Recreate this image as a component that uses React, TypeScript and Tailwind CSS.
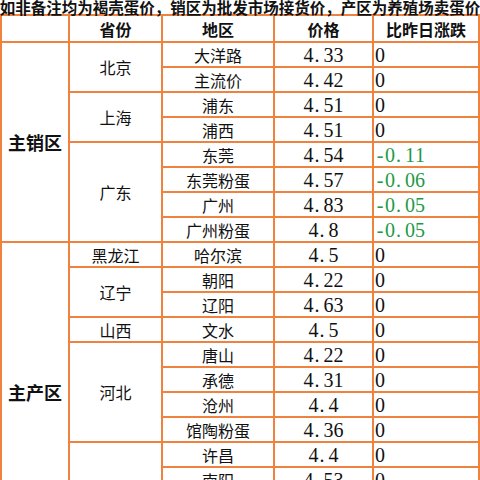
import React from "react"

const line = "border-2 border-[#f0823f]"
const cjk = "font-['Noto_Sans_CJK_SC',sans-serif]"

type Row = { area?: [string, number]; prov?: [string, number]; place: string; price: string; change: string }

const rows: Row[] = [
    { area: ["主销区", 8], prov: ["北京", 2], place: "大洋路", price: "4.33", change: "0" },
    { place: "主流价", price: "4.42", change: "0" },
    { prov: ["上海", 2], place: "浦东", price: "4.51", change: "0" },
    { place: "浦西", price: "4.51", change: "0" },
    { prov: ["广东", 4], place: "东莞", price: "4.54", change: "-0.11" },
    { place: "东莞粉蛋", price: "4.57", change: "-0.06" },
    { place: "广州", price: "4.83", change: "-0.05" },
    { place: "广州粉蛋", price: "4.8", change: "-0.05" },
    { area: ["主产区", 14], prov: ["黑龙江", 1], place: "哈尔滨", price: "4.5", change: "0" },
    { prov: ["辽宁", 2], place: "朝阳", price: "4.22", change: "0" },
    { place: "辽阳", price: "4.63", change: "0" },
    { prov: ["山西", 1], place: "文水", price: "4.5", change: "0" },
    { prov: ["河北", 4], place: "唐山", price: "4.22", change: "0" },
    { place: "承德", price: "4.31", change: "0" },
    { place: "沧州", price: "4.4", change: "0" },
    { place: "馆陶粉蛋", price: "4.36", change: "0" },
    { prov: ["河南", 4], place: "许昌", price: "4.4", change: "0" },
    { place: "南阳", price: "4.53", change: "0" },
    { place: "商丘", price: "4.4", change: "0" },
    { place: "驻马店", price: "4.4", change: "0" },
]

// SimSun-like half-width digits: every character sits in a 10px slot
function Num({ value, className }: { value: string; className?: string }) {
    return (
        <span className={"font-['Liberation_Serif',serif] text-[20px] " + (className ?? "")}>
            {value.split("").map((c, i) => (
                <span key={i} className={"inline-block w-[10px] " + (c === "." ? "text-left pl-[1px]" : "text-center")}>
                    {c}
                </span>
            ))}
        </span>
    )
}

export default function App() {
    return (
        <div className={"w-[480px] h-[480px] overflow-hidden bg-white text-[#111] " + cjk}>
            <div className="h-[14px] flex justify-center overflow-visible">
                <p className="whitespace-nowrap shrink-0 text-[15.5px] leading-[14px] font-bold">
                    如非备注均为褐壳蛋价，销区为批发市场接货价，产区为养殖场卖蛋价
                </p>
            </div>
            <table className="w-[480px] table-fixed border-collapse">
                <colgroup>
                    <col className="w-[68px]" />
                    <col className="w-[93px]" />
                    <col className="w-[112px]" />
                    <col className="w-[99px]" />
                    <col />
                </colgroup>
                <thead>
                    <tr className="h-[27px] text-[16px] font-bold">
                        <th className={line}></th>
                        <th className={line}>省份</th>
                        <th className={line}>地区</th>
                        <th className={line}>价格</th>
                        <th className={line}>比昨日涨跌</th>
                    </tr>
                </thead>
                <tbody>
                    {rows.map((r, i) => (
                        <tr key={i} className="h-[25px] text-[16px] leading-[20px]">
                            {r.area && (
                                <td rowSpan={r.area[1]} className={line + " text-center text-[18px] font-bold"}>
                                    {r.area[0]}
                                </td>
                            )}
                            {r.prov && (
                                <td rowSpan={r.prov[1]} className={line + " text-center"}>
                                    {r.prov[0]}
                                </td>
                            )}
                            <td className={line + " text-center whitespace-nowrap"}>{r.place}</td>
                            <td className={line + " text-center"}>
                                <Num value={r.price} />
                            </td>
                            <td className={line + " pl-[1px]"}>
                                <Num value={r.change} className={r.change.startsWith("-") ? "text-[#1f9a45]" : ""} />
                            </td>
                        </tr>
                    ))}
                </tbody>
            </table>
        </div>
    )
}
